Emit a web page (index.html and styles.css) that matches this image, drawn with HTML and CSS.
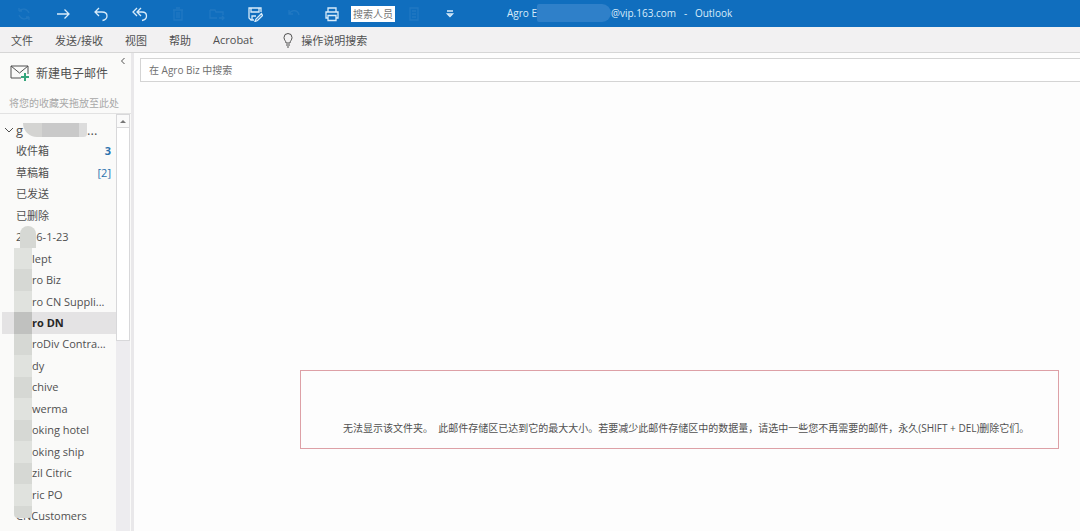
FILE: index.html
```html
<!DOCTYPE html>
<html lang="zh-CN">
<head>
  <meta charset="UTF-8">
  <meta name="viewport" content="width=device-width, initial-scale=1.0">
  <title>Outlook</title>
  <link rel="stylesheet" href="styles.css">
</head>
<body>
  <header class="titlebar">
    <div class="quick-tools">
      <button class="tool faded" aria-label="同步"><svg viewBox="0 0 16 16"><path d="M3 5V2M3 5h3M13 11v3M13 11h-3M3 5a6 6 0 0 1 10 2M13 11A6 6 0 0 1 3 9"/></svg></button>
      <button class="tool" aria-label="前进"><svg viewBox="0 0 16 16"><path d="M2 8h12M9.5 3.5 14 8l-4.5 4.5"/></svg></button>
      <button class="tool" aria-label="答复"><svg viewBox="0 0 16 16"><path d="M6 2 2 6l4 4M2 6h7c3.5 0 5 1.500 5 4s-2 4-4.500 4.500"/></svg></button>
      <button class="tool" aria-label="全部答复"><svg viewBox="0 0 16 16"><path d="M5 2 1 6l4 4M9 2 5 6l4 4M5 6h5c3 0 4.5 2 4.5 4S13 14 10 14.5"/></svg></button>
      <button class="tool faded" aria-label="删除"><svg viewBox="0 0 16 16"><path d="M4 4h8v10H4zM3 4h10M6 2h4M7 6v6M9 6v6"/></svg></button>
      <button class="tool faded" aria-label="移动"><svg viewBox="0 0 16 16"><path d="M1 4h5l1 2h7v3M1 4v8h7M10 12h5M13 10l2 2-2 2"/></svg></button>
      <button class="tool" aria-label="保存"><svg viewBox="0 0 16 16"><path d="M14 6V2H2v10l2 2h3M4 2v4h8V2M5 14v-4h4M14.5 7.5 9 13l-1 2.5 2.5-1 5-5z"/></svg></button>
      <button class="tool faded" aria-label="撤消"><svg viewBox="0 0 16 16"><path d="M3 4v4h4M3 8c3-5 9-4 10 1"/></svg></button>
      <button class="tool" aria-label="打印"><svg viewBox="0 0 16 16"><path d="M4 6V2h8v4M4 12H2V6h12v6h-2M4 9.5h8v5H4z"/></svg></button>
    </div>
    <input class="people-search" type="text" placeholder="搜索人员" aria-label="搜索人员">
    <button class="tool faded" aria-label="通讯簿"><svg viewBox="0 0 16 16"><path d="M4 2h8v12H4zM6 5h4M6 8h4M6 11h4"/></svg></button>
    <button class="tool more" aria-label="自定义快速访问工具栏"><svg viewBox="0 0 16 16"><path d="M5 5h6M5.5 8 8 10.5 10.5 8z"/></svg></button>
    <div class="window-title">
      <span>Agro E</span><span class="title-mask"></span><span>@vip.163.com&nbsp;&nbsp; - &nbsp;&nbsp;Outlook</span>
    </div>
  </header>

  <nav class="ribbon">
    <a href="#">文件</a>
    <a href="#">发送/接收</a>
    <a href="#">视图</a>
    <a href="#">帮助</a>
    <a href="#">Acrobat</a>
    <a class="tell-me" href="#">
      <svg viewBox="0 0 12 16"><path d="M4 11C4 9 2 8 2 5.5a4 4 0 0 1 8 0C10 8 8 9 8 11zM4 13h4M5 15h2"/></svg>
      操作说明搜索
    </a>
  </nav>

  <div class="main">
    <aside class="sidebar">
      <button class="collapse" aria-label="折叠文件夹窗格"><svg viewBox="0 0 6 8"><path d="M4.5 1 1.5 4l3 3"/></svg></button>
      <button class="new-mail">
        <svg viewBox="0 0 20 18"><path d="M11 14H1V2h17v8M1 2l8.5 7L18 2"/><path class="plus" d="M15 9v8M11 13h8"/></svg>
        新建电子邮件
      </button>
      <p class="favorites">将您的收藏夹拖放至此处</p>
      <div class="folder-pane">
        <ul class="folders">
          <li class="account">
            <svg viewBox="0 0 10 8"><path d="M1 2l4 4 4-4"/></svg>
            <span>g</span><span class="account-mask"></span><span>...</span>
          </li>
          <li><a href="#">收件箱</a><b class="count">3</b></li>
          <li><a href="#">草稿箱</a><span class="count">[2]</span></li>
          <li><a href="#">已发送</a></li>
          <li><a href="#">已删除</a></li>
          <li><span>2</span><span class="mask round"></span><a href="#">6-1-23</a></li>
          <li><span class="mask pale"></span><a href="#">lept</a></li>
          <li><span class="mask"></span><a href="#">ro Biz</a></li>
          <li><span class="mask pale"></span><a href="#">ro CN Suppli...</a></li>
          <li class="selected"><span class="mask dark"></span><a href="#">ro DN</a></li>
          <li><span class="mask"></span><a href="#">roDiv Contra...</a></li>
          <li><span class="mask pale"></span><a href="#">dy</a></li>
          <li><span class="mask"></span><a href="#">chive</a></li>
          <li><span class="mask pale"></span><a href="#">werma</a></li>
          <li><span class="mask"></span><a href="#">oking hotel</a></li>
          <li><span class="mask pale"></span><a href="#">oking ship</a></li>
          <li><span class="mask"></span><a href="#">zil Citric</a></li>
          <li><span class="mask pale"></span><a href="#">ric PO</a></li>
          <li class="half-masked"><span class="mask last"></span><a href="#">CNCustomers</a></li>
        </ul>
        <div class="scrollbar">
          <button class="scroll-up" aria-label="向上滚动"></button>
          <div class="scroll-thumb"></div>
        </div>
      </div>
    </aside>

    <main class="content">
      <input class="search" type="search" placeholder="在 Agro Biz 中搜索" aria-label="搜索">
      <div class="notice">
        无法显示该文件夹。&nbsp; 此邮件存储区已达到它的最大大小。若要减少此邮件存储区中的数据量，请选中一些您不再需要的邮件，永久(SHIFT + DEL)删除它们。
      </div>
    </main>
  </div>
</body>
</html>
```
FILE: styles.css
```css
* {
  box-sizing: border-box;
}
body {
  margin: 0;
  height: 100vh;
  display: flex;
  flex-direction: column;
  overflow: hidden;
  font-family: "Open Sans", "Noto Sans CJK SC", sans-serif;
  font-size: 11px;
  color: #505050;
  background: #fdfdfd;
}
button {
  border: none;
  background: none;
  padding: 0;
  font: inherit;
  color: inherit;
}
a {
  color: inherit;
  text-decoration: none;
}
svg {
  display: block;
  fill: none;
  stroke: currentColor;
  flex: none;
}

/* title bar */
.titlebar {
  display: flex;
  align-items: center;
  height: 27px;
  flex: none;
  padding-left: 16px;
  background: #106ebe;
  color: #d8ecfa;
}
.quick-tools {
  display: flex;
  justify-content: space-between;
  width: 324px;
}
.tool {
  width: 16px;
  height: 16px;
}
.tool svg {
  width: 16px;
  height: 16px;
  stroke-width: 1.3;
}
.faded {
  opacity: 0.08;
}
.people-search {
  width: 44px;
  height: 16px;
  margin: 0 11px;
  padding: 0 2px;
  border: none;
  font-family: inherit;
  font-size: 10px;
  background: #fff;
}
.people-search::placeholder {
  color: #777;
}
.more {
  margin-left: 20px;
}
.window-title {
  display: flex;
  align-items: center;
  margin-left: 49px;
  padding-bottom: 2px;
  font-size: 10px;
  white-space: nowrap;
}
.title-mask {
  width: 74px;
  height: 18px;
  border-radius: 2px 9px 9px 2px;
  background: #2f80c9;
}

/* menu tabs */
.ribbon {
  display: flex;
  align-items: center;
  gap: 22px;
  height: 26px;
  flex: none;
  padding-left: 11px;
  background: #f2f1f2;
  border-bottom: 1px solid #d6d6d6;
}
.tell-me {
  display: flex;
  align-items: center;
  gap: 7px;
  margin-left: 7px;
}
.tell-me svg {
  width: 12px;
  height: 16px;
}

.main {
  display: flex;
  flex: 1;
  min-height: 0;
}

/* folder pane */
.sidebar {
  position: relative;
  display: flex;
  flex-direction: column;
  width: 134px;
  flex: none;
  background: #fafaf9;
  border-right: 3px solid #e9e8ea;
}
.collapse {
  position: absolute;
  top: 4px;
  right: 5px;
}
.collapse svg {
  width: 6px;
  height: 8px;
}
.new-mail {
  display: flex;
  align-items: center;
  gap: 6px;
  height: 40px;
  padding-left: 10px;
  font-size: 12px;
}
.new-mail svg {
  width: 20px;
  height: 18px;
}
.new-mail .plus {
  stroke: #35a67c;
  stroke-width: 2;
}
.favorites {
  margin: 0;
  height: 21px;
  padding-left: 9px;
  font-size: 10px;
  line-height: 21px;
  color: #a8a8a8;
  border-bottom: 1px solid #e2e2e2;
}
.folder-pane {
  display: flex;
  flex: 1;
  min-height: 0;
}
.folders {
  display: grid;
  grid-auto-rows: 1fr;
  flex: 1;
  min-width: 0;
  margin: 0;
  padding: 5px 0 4px 2px;
  list-style: none;
}
.folders li {
  display: flex;
  align-items: center;
  min-height: 0;
  padding-left: 14px;
  line-height: 16px;
  white-space: nowrap;
}
.folders .account {
  padding-left: 2px;
  font-size: 13px;
}
.account svg {
  width: 10px;
  height: 8px;
  margin-right: 2px;
}
.account-mask {
  width: 64px;
  height: 14px;
  border-radius: 0 0 4px 16px;
  background: linear-gradient(90deg, #d4d4d2 30%, #c9c9c9 30%, #c9c9c9 88%, #dcdcdc 88%);
}
.count {
  margin-left: auto;
  padding-right: 5px;
  color: #2b72ae;
}
.folders .selected {
  font-weight: bold;
  color: #262626;
  background: #e4e3e4;
}
.mask {
  align-self: stretch;
  width: 18px;
  margin-left: -2px;
  background: #d6d8d4;
}
.mask.pale {
  background: #e0e2de;
}
.mask.dark {
  background: #c0c1bf;
}
.mask.round {
  width: 16px;
  border-radius: 8px 8px 0 0;
}
.half-masked {
  position: relative;
}
.mask.last {
  position: absolute;
  top: 0;
  left: 14px;
  height: 12px;
  border-radius: 0 0 4px 4px;
}
.scrollbar {
  width: 14px;
  margin-right: 1px;
  background: #edecef;
}
.scroll-up {
  display: flex;
  align-items: center;
  justify-content: center;
  width: 100%;
  height: 14px;
  border: 1px solid #d8d8da;
  background: #fafafa;
}
.scroll-up::before {
  content: "";
  border: 3px solid transparent;
  border-top: none;
  border-bottom-color: #777;
}
.scroll-thumb {
  height: 51%;
  border: 1px solid #d8d8da;
  border-top: none;
  background: #fff;
}

/* reading area */
.content {
  display: flex;
  flex-direction: column;
  flex: 1;
  min-width: 0;
}
.search {
  height: 24px;
  flex: none;
  margin: 5px 0 0 6px;
  padding: 0 8px;
  border: 1px solid #d4d4d4;
  border-right: none;
  font-family: inherit;
  font-size: 10px;
  background: #fff;
  appearance: none;
}
.search::placeholder {
  color: #707070;
}
.notice {
  margin: auto 21px 82px 166px;
  padding: 48px 30px 11px 42px;
  border: 1px solid #dda0a6;
  font-size: 10px;
  line-height: 18px;
  white-space: nowrap;
}
```
